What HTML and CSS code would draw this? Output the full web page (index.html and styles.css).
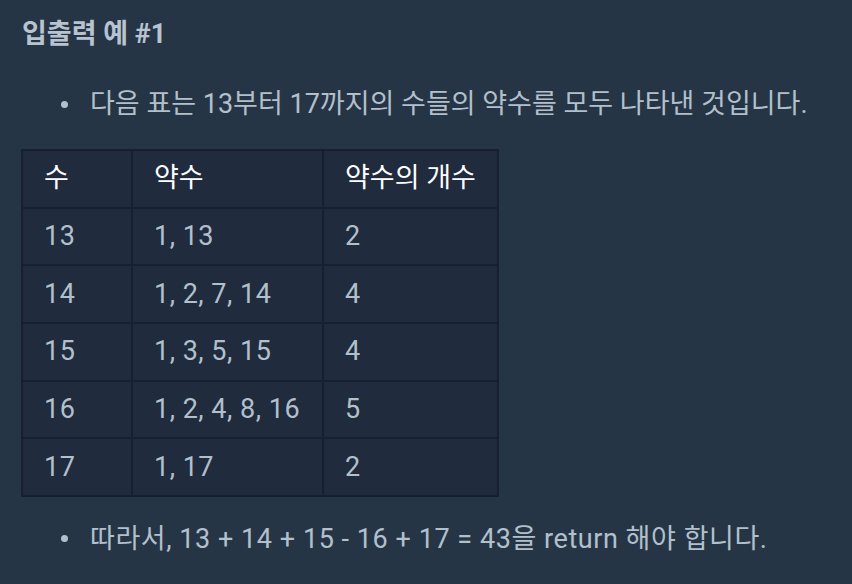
FILE: index.html
```html
<!DOCTYPE html>
<html lang="ko">
<head>
<meta charset="utf-8">
<link rel="stylesheet" href="styles.css">
</head>
<body>
<div class="content">
  <h5 class="title">입출력 예 #1</h5>
  <ul class="list">
    <li class="item">다음 표는 13부터 17까지의 수들의 약수를 모두 나타낸 것입니다.</li>
  </ul>
  <table class="grid">
    <thead>
      <tr><th class="c1">수</th><th class="c2">약수</th><th class="c3">약수의 개수</th></tr>
    </thead>
    <tbody>
      <tr><td>13</td><td>1, 13</td><td>2</td></tr>
      <tr><td>14</td><td>1, 2, 7, 14</td><td>4</td></tr>
      <tr><td>15</td><td>1, 3, 5, 15</td><td>4</td></tr>
      <tr><td>16</td><td>1, 2, 4, 8, 16</td><td>5</td></tr>
      <tr><td>17</td><td>1, 17</td><td>2</td></tr>
    </tbody>
  </table>
  <ul class="list">
    <li class="item item-wide">따라서, 13 + 14 + 15 - 16 + 17 = 43을 return 해야 합니다.</li>
  </ul>
</div>
</body>
</html>
```

FILE: styles.css
```css
html, body {
  margin: 0;
  padding: 0;
  background: #263546;
}
body {
  font-family: Roboto, "Noto Sans CJK KR", sans-serif;
  color: #b2c0cc;
}
.content {
  padding: 16px 22px 0 22px;
}
.title {
  margin: 0;
  font-size: 27px;
  line-height: 36px;
  font-weight: 700;
  color: #b7c4d0;
}
.list {
  list-style: none;
  margin: 0;
  padding: 0 0 0 39px;
}
.list:first-of-type {
  margin-top: 34px;
}
.item {
  display: flex;
  align-items: center;
  font-size: 27px;
  line-height: 36px;
  color: #b2c0cc;
  white-space: nowrap;
}
.item-wide {
  letter-spacing: 0.55px;
}
.item::before {
  content: "";
  width: 7px;
  height: 7px;
  border-radius: 50%;
  background: #b2c0cc;
  margin-right: 22px;
  flex: none;
}
.grid {
  border-collapse: collapse;
  background: #202b3d;
  margin: 27px 0 24px -1px;
  font-size: 27px;
  line-height: 37px;
  white-space: nowrap;
}
.grid th, .grid td {
  border: 2px solid #172030;
  padding: 9.33px 21px;
  text-align: left;
  font-weight: 400;
}
.grid td {
  letter-spacing: 0.5px;
  color: #b2c0cc;
}
.grid th {
  color: #ffffff;
}
.c1 { width: 66px; }
.c2 { width: 147px; }
.c3 { width: 131px; }
```
